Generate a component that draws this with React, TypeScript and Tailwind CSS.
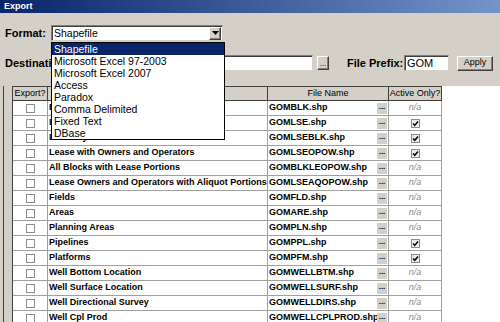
import React from 'react';

type Row = { name: string; file: string; active: boolean | null };

const rows: Row[] = [
  { name: 'Blocks', file: 'GOMBLK.shp', active: null },
  { name: 'Leases', file: 'GOMLSE.shp', active: true },
  { name: 'Lease by Blocks', file: 'GOMLSEBLK.shp', active: true },
  { name: 'Lease with Owners and Operators', file: 'GOMLSEOPOW.shp', active: true },
  { name: 'All Blocks with Lease Portions', file: 'GOMBLKLEOPOW.shp', active: null },
  { name: 'Lease Owners and Operators with Aliquot Portions', file: 'GOMLSEAQOPOW.shp', active: null },
  { name: 'Fields', file: 'GOMFLD.shp', active: null },
  { name: 'Areas', file: 'GOMARE.shp', active: null },
  { name: 'Planning Areas', file: 'GOMPLN.shp', active: null },
  { name: 'Pipelines', file: 'GOMPPL.shp', active: true },
  { name: 'Platforms', file: 'GOMPFM.shp', active: true },
  { name: 'Well Bottom Location', file: 'GOMWELLBTM.shp', active: null },
  { name: 'Well Surface Location', file: 'GOMWELLSURF.shp', active: null },
  { name: 'Well Directional Survey', file: 'GOMWELLDIRS.shp', active: null },
  { name: 'Well Cpl Prod', file: 'GOMWELLCPLPROD.shp', active: null },
];

const formats = [
  'Shapefile',
  'Microsoft Excel 97-2003',
  'Microsoft Excel 2007',
  'Access',
  'Paradox',
  'Comma Delimited',
  'Fixed Text',
  'DBase',
];

const raised =
  'bg-[#d4d0c8] border border-t-white border-l-white border-r-[#404040] border-b-[#404040] shadow-[inset_-1px_-1px_0_#808080]';
const sunken =
  'bg-white border border-t-[#808080] border-l-[#808080] border-r-[#d4d0c8] border-b-[#d4d0c8] shadow-[inset_1px_1px_0_#404040]';

const CheckedBox = () => (
  <span className="w-[9px] h-[9px] border border-[#8a8a8a] bg-[#ececec] flex items-center justify-center">
    <svg width="7" height="7" viewBox="0 0 7 7">
      <path d="M1 3.5 L2.8 5.3 L6 1.5" stroke="#000" strokeWidth="1.5" fill="none" />
    </svg>
  </span>
);

export default function App() {
  return (
    <div className="relative w-[500px] h-[322px] overflow-hidden bg-white font-['Liberation_Sans',Arial,sans-serif] text-black">
      {/* title bar */}
      <div className="h-[13px] bg-gradient-to-r from-[#0a246a] to-[#7495ca] flex items-center pl-[4px]">
        <span className="text-white font-bold text-[9px] leading-none">Export</span>
      </div>

      {/* options panel */}
      <div className="h-[73px] bg-[#d4d0c8] pt-[12px] pl-[5px]">
        <div className="flex items-center h-[16px]">
          <span className="w-[46px] text-[11px] font-bold">Format:</span>
          <div className={`w-[172px] h-[16px] flex items-center ${sunken}`}>
            <span className="flex-1 pl-[2px] text-[10.5px] leading-none">Shapefile</span>
            <span className={`w-[12px] h-[13px] mr-[1px] flex items-center justify-center ${raised}`}>
              <svg width="7" height="4" viewBox="0 0 7 4">
                <path d="M0 0 H7 L3.5 4 Z" fill="#000" />
              </svg>
            </span>
          </div>
        </div>

        <div className="flex items-center h-[16px] mt-[14px]">
          <span className="w-[65px] text-[11px] font-bold">Destination:</span>
          <div className={`w-[243px] h-[16px] ${sunken}`} />
          <span className={`ml-[4px] w-[12px] h-[14px] flex items-end justify-center text-[8px] leading-[10px] ${raised}`}>...</span>
          <span className="ml-[18px] w-[57px] text-[11px] font-bold">File Prefix:</span>
          <div className={`w-[45px] h-[16px] flex items-center pl-[2px] text-[11px] ${sunken}`}>GOM</div>
          <span className={`ml-[8px] w-[36px] h-[15px] flex items-center justify-center text-[9px] ${raised}`}>Apply</span>
        </div>
      </div>

      {/* grid */}
      <div className="flex">
        <div className="w-[3px] bg-[#d4d0c8]" />
        <div className="w-[10px] bg-[#d4d0c8] border-l border-r border-[#404040]" />
        <div className="w-[429px]">
          <div className="flex h-[15px] bg-[#d4d0c8] border-t border-b border-[#404040] text-[9px]">
            <div className="w-[35px] border-r border-[#404040] flex items-center justify-center">Export?</div>
            <div className="w-[220px] border-r border-[#404040] flex items-center justify-center">Layer</div>
            <div className="w-[121px] border-r border-[#404040] flex items-center justify-center">File Name</div>
            <div className="w-[53px] border-r border-[#404040] flex items-center justify-center">Active Only?</div>
          </div>
          {rows.map((r) => (
            <div key={r.file} className="flex h-[15px] border-b border-[#a0a0a0] text-[9px]">
              <div className="w-[35px] border-r border-[#a0a0a0] flex items-center justify-center">
                <span className="w-[9px] h-[9px] border border-[#8c8c8c] bg-white" />
              </div>
              <div className="w-[220px] border-r border-[#a0a0a0] flex items-center pl-[1px] font-bold whitespace-nowrap overflow-hidden">
                {r.name}
              </div>
              <div className="w-[121px] border-r border-[#a0a0a0] flex items-center pl-[1px] font-bold whitespace-nowrap">
                <span className="flex-1 overflow-hidden">{r.file}</span>
                <span className="w-[10px] h-[11px] mr-[1px] bg-[#d4d0c8] flex items-start justify-center text-[8px] leading-[7px] font-bold">...</span>
              </div>
              <div className="w-[53px] border-r border-[#a0a0a0] flex items-center justify-center">
                {r.active ? <CheckedBox /> : <span className="italic text-[#8a8a8a]">n/a</span>}
              </div>
            </div>
          ))}
        </div>
      </div>

      {/* open dropdown list */}
      <div className="absolute left-[51px] top-[42px] w-[174px] h-[98px] bg-white border border-black">
        {formats.map((f, i) => (
          <div
            key={f}
            className={`h-[12px] flex items-center pl-[2px] text-[10.5px] leading-none ${
              i === 0 ? 'bg-[#0a246a] text-white' : ''
            }`}
          >
            {f}
          </div>
        ))}
      </div>
    </div>
  );
}
